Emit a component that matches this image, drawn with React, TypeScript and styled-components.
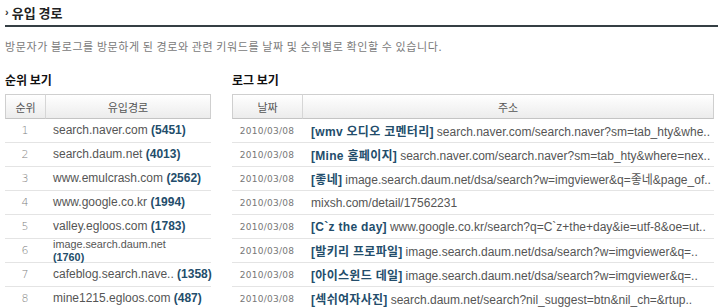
import React from "react";
import styled, { createGlobalStyle } from "styled-components";

const Global = createGlobalStyle`
  html, body { margin: 0; padding: 0; background: #fff; }
  body { font-family: "Liberation Sans", "Noto Sans CJK KR", sans-serif; }
`;

const Page = styled.div`
  width: 713px;
  padding: 0 2px 0 5px;
`;

const TitleBar = styled.div`
  display: flex;
  align-items: center;
  gap: 3px;
  height: 27px;
  border-bottom: 2px solid #353f44;
  box-sizing: border-box;
`;

const Chevron = styled.span`
  font-size: 11px;
  font-weight: bold;
  color: #333;
  line-height: 1;
  margin-top: -1px;
`;

const Title = styled.h1`
  margin: 0;
  font-size: 13px;
  font-weight: bold;
  color: #222;
  line-height: 16px;
  font-family: "Noto Sans CJK KR", sans-serif;
`;

const Desc = styled.p`
  margin: 12px 0 0;
  font-size: 11px;
  letter-spacing: 0.6px;
  line-height: 14px;
  color: #7a7a7a;
  font-family: "Noto Sans CJK KR", sans-serif;
`;

const Panels = styled.div`
  display: flex;
  gap: 21px;
  margin-top: 20px;
`;

const Panel = styled.section<{ $w: number }>`
  width: ${(p) => p.$w}px;
  flex: none;
`;

const PanelTitle = styled.h2`
  margin: 0 0 7px;
  font-size: 12px;
  font-weight: bold;
  color: #111;
  line-height: 14px;
  font-family: "Noto Sans CJK KR", sans-serif;
`;

const Table = styled.div<{ $cols: string }>`
  display: grid;
  grid-template-columns: ${(p) => p.$cols};
`;

const Head = styled.div`
  display: contents;
`;

const HeadCell = styled.div<{ $first?: boolean; $last?: boolean }>`
  height: 23px;
  display: flex;
  align-items: center;
  justify-content: center;
  font-size: 11px;
  color: #555;
  font-family: "Noto Sans CJK KR", sans-serif;
  background: linear-gradient(#ffffff, #ececec);
  border-top: 1px solid #cfcfcf;
  border-bottom: 1px solid #c4c4c4;
  border-left: 1px solid ${(p) => (p.$first ? "#cfcfcf" : "#d6d6d6")};
  border-right: ${(p) => (p.$last ? "1px solid #cfcfcf" : "none")};
`;

const Cell = styled.div<{ $align?: string; $pad?: number }>`
  height: 23px;
  border-bottom: 1px solid #e4e4e4;
  display: flex;
  align-items: center;
  justify-content: ${(p) => p.$align || "flex-start"};
  padding-left: ${(p) => p.$pad ?? 0}px;
  white-space: nowrap;
  min-width: 0;
`;

const Rank = styled.span`
  font-size: 11px;
  color: #808080;
  font-family: "DejaVu Sans", sans-serif;
  font-weight: 200;
`;

const Source = styled.span<{ $wrap?: boolean }>`
  font-size: ${(p) => (p.$wrap ? "10.8px" : "12px")};
  line-height: 12.5px;
  color: #555;
  white-space: ${(p) => (p.$wrap ? "normal" : "nowrap")};
`;

const Count = styled.b`
  color: #234d6b;
  font-weight: bold;
`;

const DateText = styled.span`
  font-size: 9px;
  letter-spacing: 0.25px;
  color: #777;
  font-family: "DejaVu Sans", sans-serif;
`;

const Url = styled.span`
  font-size: 12px;
  color: #555;
`;

const Keyword = styled.b`
  color: #234d6b;
  font-weight: bold;
  letter-spacing: 0.3px;
  margin-right: 3px;
`;

const ranks = [
  { host: "search.naver.com", n: 5451 },
  { host: "search.daum.net", n: 4013 },
  { host: "www.emulcrash.com", n: 2562 },
  { host: "www.google.co.kr", n: 1994 },
  { host: "valley.egloos.com", n: 1783 },
  { host: "image.search.daum.net", n: 1760, wrap: true },
  { host: "cafeblog.search.nave..", n: 1358 },
  { host: "mine1215.egloos.com", n: 487 },
];

const logs = [
  { kw: "[wmv 오디오 코멘터리]", url: "search.naver.com/search.naver?sm=tab_hty&whe.." },
  { kw: "[Mine 홈페이지]", url: "search.naver.com/search.naver?sm=tab_hty&where=nex.." },
  { kw: "[좋네]", url: "image.search.daum.net/dsa/search?w=imgviewer&q=좋네&page_of.." },
  { kw: "", url: "mixsh.com/detail/17562231" },
  { kw: "[C`z the day]", url: "www.google.co.kr/search?q=C`z+the+day&ie=utf-8&oe=ut.." },
  { kw: "[발키리 프로파일]", url: "image.search.daum.net/dsa/search?w=imgviewer&q=.." },
  { kw: "[아이스윈드 데일]", url: "image.search.daum.net/dsa/search?w=imgviewer&q=.." },
  { kw: "[섹쉬여자사진]", url: "search.daum.net/search?nil_suggest=btn&nil_ch=&rtup.." },
];

export default function App() {
  return (
    <Page>
      <Global />
      <TitleBar>
        <Chevron>›</Chevron>
        <Title>유입 경로</Title>
      </TitleBar>
      <Desc>방문자가 블로그를 방문하게 된 경로와 관련 키워드를 날짜 및 순위별로 확인할 수 있습니다.</Desc>
      <Panels>
        <Panel $w={206}>
          <PanelTitle>순위 보기</PanelTitle>
          <Table $cols="40px 166px">
            <Head>
              <HeadCell $first>순위</HeadCell>
              <HeadCell $last>유입경로</HeadCell>
            </Head>
            {ranks.map((r, i) => (
              <React.Fragment key={i}>
                <Cell $align="center">
                  <Rank>{i + 1}</Rank>
                </Cell>
                <Cell $pad={8}>
                  <Source $wrap={r.wrap}>
                    {r.host}
                    {r.wrap ? <br /> : " "}
                    <Count>({r.n})</Count>
                  </Source>
                </Cell>
              </React.Fragment>
            ))}
          </Table>
        </Panel>
        <Panel $w={482}>
          <PanelTitle>로그 보기</PanelTitle>
          <Table $cols="70px 412px">
            <Head>
              <HeadCell $first>날짜</HeadCell>
              <HeadCell $last>주소</HeadCell>
            </Head>
            {logs.map((l, i) => (
              <React.Fragment key={i}>
                <Cell $align="center">
                  <DateText>2010/03/08</DateText>
                </Cell>
                <Cell $pad={9}>
                  <Url>
                    {l.kw && <Keyword>{l.kw}</Keyword>}
                    {l.url}
                  </Url>
                </Cell>
              </React.Fragment>
            ))}
          </Table>
        </Panel>
      </Panels>
    </Page>
  );
}
